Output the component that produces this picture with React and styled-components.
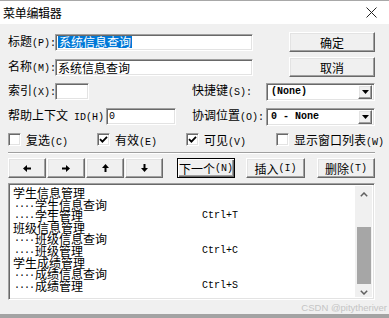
import React from 'react';
import styled, { createGlobalStyle, css } from 'styled-components';

const Global = createGlobalStyle`
  html, body { margin: 0; padding: 0; background: #f0f0f0; }
  body {
    font-family: "Noto Sans CJK SC", sans-serif;
    font-size: 12px;
    color: #000;
  }
`;

const sunken = css`
  box-sizing: border-box;
  background: #fff;
  border: 1px solid;
  border-color: #a0a0a0 #ffffff #ffffff #a0a0a0;
  box-shadow: inset 1px 1px 0 #696969, inset -1px -1px 0 #e3e3e3;
`;

const raised = css`
  box-sizing: border-box;
  background: #f0f0f0;
  border: 1px solid;
  border-color: #ffffff #696969 #696969 #ffffff;
  box-shadow: inset -1px -1px 0 #a0a0a0, inset 1px 1px 0 #e3e3e3;
`;

const Window = styled.div`
  width: 389px;
  height: 318px;
  box-sizing: border-box;
  border-top: 1px solid #a8a8a8;
  background: #f0f0f0;
  display: flex;
  flex-direction: column;
  overflow: hidden;
`;

const TitleBar = styled.div`
  height: 23px;
  flex: none;
  background: #fff;
  display: flex;
  align-items: center;
  justify-content: space-between;
  padding: 0 12px 0 3px;
`;

const TitleText = styled.span`
  font-size: 12px;
  letter-spacing: -0.3px;
`;

const Body = styled.div`
  flex: 1;
  display: flex;
  flex-direction: column;
  padding: 8px 14px 0 8px;
`;

const Row = styled.div`
  display: flex;
  align-items: center;
  height: ${p => p.$h}px;
  margin-top: ${p => p.$mt || 0}px;
`;

const Split = styled.div`
  display: grid;
  grid-template-columns: 184px 1fr;
  align-items: center;
  height: ${p => p.$h}px;
  margin-top: ${p => p.$mt || 0}px;
`;

const Cell = styled.div`
  display: flex;
  align-items: center;
`;

const FieldLabel = styled.span`
  width: ${p => p.$w}px;
  flex: none;
  white-space: nowrap;
  line-height: 14px;
`;

const Latin = styled.span`
  font-family: "Liberation Mono", monospace;
  font-size: 10px;
`;

const TextBox = styled.div`
  ${sunken};
  width: ${p => p.$w}px;
  height: 17px;
  flex: none;
  display: flex;
  align-items: center;
  padding-left: 2px;
  line-height: 13px;
  overflow: hidden;
  white-space: nowrap;
`;

const Selected = styled.span`
  background: #0078d7;
  color: #fff;
  line-height: 12px;
  padding: 0 1px;
`;

const PushButton = styled.div`
  ${raised};
  width: ${p => p.$w}px;
  height: ${p => p.$h || 20}px;
  flex: none;
  display: flex;
  align-items: center;
  justify-content: center;
  margin-left: ${p => p.$ml || 0}px;
  white-space: nowrap;
  ${p => p.$default && css`
    border-color: #000;
    box-shadow: inset 1px 1px 0 #fff, inset -1px -1px 0 #696969, inset -2px -2px 0 #a0a0a0;
  `}
`;

const Spacer = styled.div`
  flex: 1;
`;

const ComboBox = styled.div`
  ${sunken};
  width: ${p => p.$w}px;
  height: 18px;
  flex: none;
  display: flex;
  align-items: center;
  padding: 2px;
`;

const ComboText = styled.span`
  flex: 1;
  font-family: "Liberation Mono", monospace;
  font-size: 10px;
  font-weight: bold;
  padding-left: 2px;
`;

const DropButton = styled.div`
  ${raised};
  width: 14px;
  height: 14px;
  display: flex;
  align-items: center;
  justify-content: center;
`;

const CheckRow = styled.div`
  display: grid;
  grid-template-columns: 89px 89px 90px 1fr;
  align-items: center;
  height: 14px;
  margin-top: ${p => p.$mt}px;
`;

const CheckItem = styled.div`
  display: flex;
  align-items: center;
  gap: 5px;
  white-space: nowrap;
`;

const CheckBox = styled.div`
  ${sunken};
  width: 13px;
  height: 13px;
  display: flex;
  align-items: center;
  justify-content: center;
`;

const Separator = styled.div`
  height: 0;
  border-top: 1px solid #a0a0a0;
  border-bottom: 1px solid #ffffff;
  margin-top: ${p => p.$mt}px;
`;

const ArrowGroup = styled.div`
  display: flex;
  gap: 1px;
`;

const ListBox = styled.div`
  ${sunken};
  height: 117px;
  margin-top: 5px;
  display: flex;
  padding: 2px;
`;

const ListContent = styled.div`
  flex: 1;
  padding: 1px 0 0 2px;
`;

const ListLine = styled.div`
  height: 11.6px;
  line-height: 11.6px;
  white-space: nowrap;
  display: flex;
  align-items: center;
`;

const Caption = styled.span`
  width: ${p => (p.$indent ? 167 : 188)}px;
  flex: none;
`;

const Dots = styled.span`
  font-family: "Liberation Mono", monospace;
  font-size: 10px;
  width: 21px;
  flex: none;
  letter-spacing: -1px;
  padding-left: 1px;
`;

const Shortcut = styled.span`
  font-family: "Liberation Mono", monospace;
  font-size: 10px;
`;

const ScrollBar = styled.div`
  width: 17px;
  flex: none;
  background: #f0f0f0;
  display: flex;
  flex-direction: column;
`;

const ScrollArrow = styled.div`
  height: 17px;
  flex: none;
  display: flex;
  align-items: center;
  justify-content: center;
`;

const Track = styled.div`
  flex: 1;
  display: flex;
  flex-direction: column;
  align-items: center;
`;

const Thumb = styled.div`
  width: 14px;
  height: ${p => p.$h}px;
  margin-top: ${p => p.$top}px;
  background: #a6a6a6;
`;

const Footer = styled.div`
  height: 14px;
  flex: none;
  display: flex;
  justify-content: flex-end;
  align-items: center;
  margin-right: -12px;
`;

const Watermark = styled.span`
  font-family: "Liberation Sans", Arial, sans-serif;
  font-size: 9.5px;
  color: #c4c4c4;
`;

const BottomStrip = styled.div`
  height: 4px;
  flex: none;
  background: #a3a3a3;
`;

const Close = () => (
  <svg width="11" height="11" viewBox="0 0 11 11">
    <path d="M0.5 0.5 L10.5 10.5 M10.5 0.5 L0.5 10.5" stroke="#222" strokeWidth="1" fill="none" />
  </svg>
);

const DropArrow = () => (
  <svg width="7" height="6" viewBox="0 0 7 6">
    <path d="M0 1 H7 L3.5 5 Z" fill="#000" />
  </svg>
);

const Check = () => (
  <svg width="9" height="9" viewBox="0 0 9 9">
    <path d="M1 4.2 L3.4 6.6 L8 1.8" stroke="#000" strokeWidth="1.8" fill="none" />
  </svg>
);

const arrows = {
  left: 'M0 3.5 L4 0 L4 2.5 L8 2.5 L8 4.5 L4 4.5 L4 7 Z',
  right: 'M8 3.5 L4 0 L4 2.5 L0 2.5 L0 4.5 L4 4.5 L4 7 Z',
  up: 'M3.5 0 L0 4 L2.5 4 L2.5 8 L4.5 8 L4.5 4 L7 4 Z',
  down: 'M3.5 8 L0 4 L2.5 4 L2.5 0 L4.5 0 L4.5 4 L7 4 Z',
};

const Arrow = ({ dir }) => {
  const wide = dir === 'left' || dir === 'right';
  return (
    <svg width={wide ? 8 : 7} height={wide ? 7 : 8} viewBox={wide ? '0 0 8 7' : '0 0 7 8'}>
      <path d={arrows[dir]} fill="#000" />
    </svg>
  );
};

const Chevron = ({ up }) => (
  <svg width="8" height="5" viewBox="0 0 8 5">
    <path d={up ? 'M0.8 4.2 L4 1 L7.2 4.2' : 'M0.8 0.8 L4 4 L7.2 0.8'} stroke="#606060" strokeWidth="1.5" fill="none" />
  </svg>
);

const items = [
  { text: '学生信息管理' },
  { text: '学生信息查询', indent: true },
  { text: '学生管理', indent: true, key: 'Ctrl+T' },
  { text: '班级信息管理' },
  { text: '班级信息查询', indent: true },
  { text: '班级管理', indent: true, key: 'Ctrl+C' },
  { text: '学生成绩管理' },
  { text: '成绩信息查询', indent: true },
  { text: '成绩管理', indent: true, key: 'Ctrl+S' },
];

const checks = [
  { label: '复选', key: '(C)', on: false },
  { label: '有效', key: '(E)', on: true },
  { label: '可见', key: '(V)', on: true },
  { label: '显示窗口列表', key: '(W)', on: false },
];

export default function App() {
  return (
    <>
      <Global />
      <Window>
        <TitleBar>
          <TitleText>菜单编辑器</TitleText>
          <Close />
        </TitleBar>
        <Body>
          <Row $h={20}>
            <FieldLabel $w={47}>标题<Latin>(P):</Latin></FieldLabel>
            <TextBox $w={198}><Selected>系统信息查询</Selected></TextBox>
            <Spacer />
            <PushButton $w={86}>确定</PushButton>
          </Row>
          <Row $h={20} $mt={5}>
            <FieldLabel $w={47}>名称<Latin>(M):</Latin></FieldLabel>
            <TextBox $w={198}>系统信息查询</TextBox>
            <Spacer />
            <PushButton $w={86}>取消</PushButton>
          </Row>
          <Split $h={19} $mt={5}>
            <Cell>
              <FieldLabel $w={47}>索引<Latin>(X):</Latin></FieldLabel>
              <TextBox $w={34} />
            </Cell>
            <Cell>
              <FieldLabel $w={74}>快捷键<Latin>(S):</Latin></FieldLabel>
              <ComboBox $w={109}>
                <ComboText>(None)</ComboText>
                <DropButton><DropArrow /></DropButton>
              </ComboBox>
            </Cell>
          </Split>
          <Split $h={19} $mt={6}>
            <Cell>
              <FieldLabel $w={98}>帮助上下文<Latin> ID(H):</Latin></FieldLabel>
              <TextBox $w={70}><Latin>0</Latin></TextBox>
            </Cell>
            <Cell>
              <FieldLabel $w={74}>协调位置<Latin>(O):</Latin></FieldLabel>
              <ComboBox $w={109}>
                <ComboText>0 - None</ComboText>
                <DropButton><DropArrow /></DropButton>
              </ComboBox>
            </Cell>
          </Split>
          <CheckRow $mt={5}>
            {checks.map(c => (
              <CheckItem key={c.label}>
                <CheckBox>{c.on && <Check />}</CheckBox>
                <span>{c.label}<Latin>{c.key}</Latin></span>
              </CheckItem>
            ))}
          </CheckRow>
          <Separator $mt={7} />
          <Row $h={20} $mt={4}>
            <ArrowGroup>
              {['left', 'right', 'up', 'down'].map(d => (
                <PushButton key={d} $w={38}><Arrow dir={d} /></PushButton>
              ))}
            </ArrowGroup>
            <PushButton $w={58} $ml={14} $default>下一个<Latin>(N)</Latin></PushButton>
            <PushButton $w={59} $ml={11}>插入<Latin>(I)</Latin></PushButton>
            <PushButton $w={58} $ml={12}>删除<Latin>(T)</Latin></PushButton>
          </Row>
          <ListBox>
            <ListContent>
              {items.map((it, i) => (
                <ListLine key={i}>
                  {it.indent && <Dots>....</Dots>}
                  <Caption $indent={it.indent}>{it.text}</Caption>
                  {it.key && <Shortcut>{it.key}</Shortcut>}
                </ListLine>
              ))}
            </ListContent>
            <ScrollBar>
              <ScrollArrow><Chevron up /></ScrollArrow>
              <Track>
                <Thumb $top={24} $h={57} />
              </Track>
              <ScrollArrow><Chevron /></ScrollArrow>
            </ScrollBar>
          </ListBox>
          <Footer>
            <Watermark>CSDN @pitytheriver</Watermark>
          </Footer>
        </Body>
        <BottomStrip />
      </Window>
    </>
  );
}
